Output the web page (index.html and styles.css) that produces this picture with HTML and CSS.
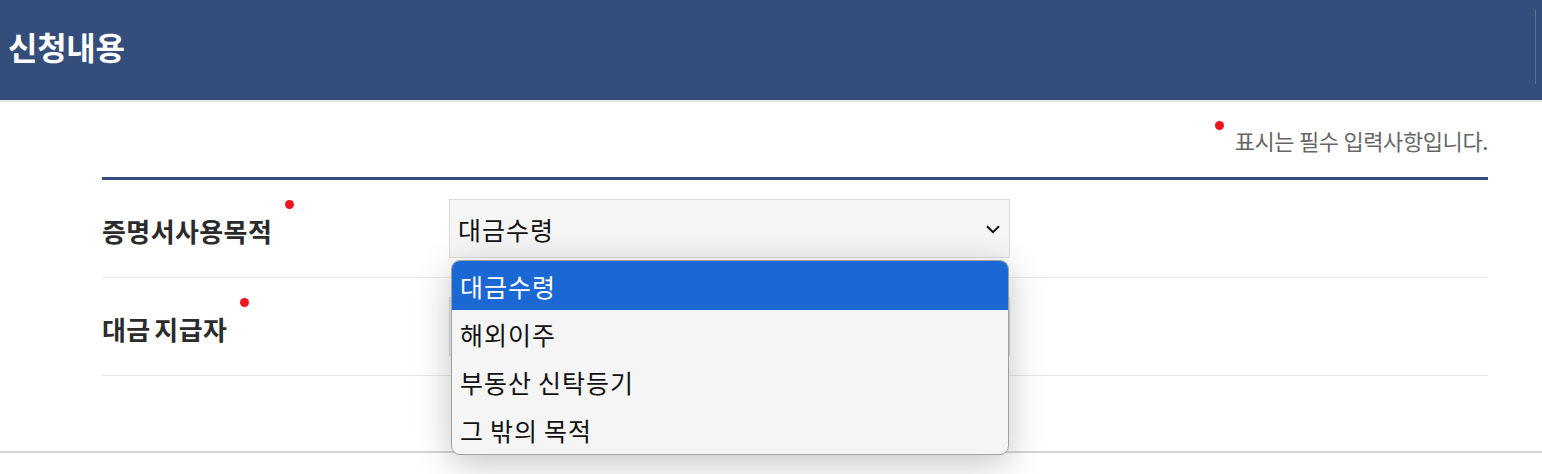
FILE: index.html
```html
<!DOCTYPE html>
<html lang="ko">
<head>
<meta charset="utf-8">
<title>신청내용</title>
<link rel="stylesheet" href="styles.css">
</head>
<body>
<header class="top">
  <h1 class="title">신청내용</h1>
  <div class="top-edge"></div>
</header>
<main class="content">
  <p class="note"><span class="dot note-dot"></span>표시는 필수 입력사항입니다.</p>
  <div class="form">
    <div class="row">
      <div class="label">증명서사용목적<span class="dot label-dot"></span></div>
      <div class="field">
        <div class="select">
          <span>대금수령</span>
          <svg class="chev" width="14" height="9" viewBox="0 0 14 9"><path d="M1 1.2 L7 7.2 L13 1.2" fill="none" stroke="#111" stroke-width="2"/></svg>
        </div>
        <ul class="menu">
          <li class="opt sel">대금수령</li>
          <li class="opt">해외이주</li>
          <li class="opt">부동산 신탁등기</li>
          <li class="opt">그 밖의 목적</li>
        </ul>
      </div>
    </div>
    <div class="row">
      <div class="label">대금 지급자<span class="dot label-dot"></span></div>
      <div class="field">
        <div class="select"><span></span></div>
      </div>
    </div>
  </div>
</main>
<div class="bottom-line"></div>
</body>
</html>
```
FILE: styles.css
```css
* { box-sizing: border-box; }
html, body { margin: 0; padding: 0; background: #fff; }
body {
  width: 1542px;
  min-height: 474px;
  font-family: "Noto Sans CJK KR", "Noto Sans", sans-serif;
  color: #222;
}
.top {
  height: 100px;
  background: #344d7a;
  display: flex;
  align-items: center;
  justify-content: space-between;
  border-bottom: 2px solid #e6e6e6;
  box-sizing: content-box;
}
.title {
  margin: 0 0 8px 8px;
  font-size: 32px;
  font-weight: 700;
  color: #fff;
  letter-spacing: -0.3px;
}
.top-edge {
  width: 1px;
  height: 75px;
  background: #5a6f95;
  margin-right: 6px;
  margin-bottom: 8px;
}
.content {
  padding: 0 54px 0 102px;
}
.note {
  margin: 0;
  height: 75px;
  display: flex;
  justify-content: flex-end;
  align-items: center;
  font-size: 22px;
  color: #666;
  letter-spacing: -0.4px;
  word-spacing: -1px;
  line-height: 1;
}
.dot {
  display: inline-block;
  flex: none;
  width: 9px;
  height: 9px;
  border-radius: 50%;
  background: #f0141e;
}
.note-dot {
  margin-right: 11px;
  align-self: flex-start;
  margin-top: 19px;
}
.form {
  border-top: 3px solid #344d7a;
}
.row {
  display: flex;
  height: 98px;
  border-bottom: 1px solid #e8e8e8;
  padding-top: 19px;
}
.label {
  width: 347px;
  font-size: 26px;
  font-weight: 700;
  color: #2b2b2b;
  padding-top: 12px;
  display: flex;
  align-items: flex-start;
  line-height: 40px;
  letter-spacing: 0.4px;
  word-spacing: -4px;
}
.label-dot {
  margin-left: 13px;
  margin-top: -11px;
}
.field {
  position: relative;
  width: 561px;
}
.select {
  height: 59px;
  background: #f5f5f5;
  border: 1px solid #dcdcdc;
  display: flex;
  align-items: center;
  justify-content: space-between;
  padding: 0 9px 0 8px;
  font-size: 25px;
  letter-spacing: 1px;
  color: #111;
}
.chev { margin-top: 2px; }
.menu {
  position: absolute;
  left: 2px;
  top: 61px;
  width: 558px;
  margin: 0;
  padding: 0;
  list-style: none;
  background: #f5f5f5;
  border: 1.5px solid #a0a0a0;
  border-radius: 9px;
  overflow: hidden;
  box-shadow: 0 8px 36px rgba(0,0,0,0.24);
  z-index: 5;
}
.opt {
  height: 48px;
  display: flex;
  align-items: center;
  padding-left: 8px;
  font-size: 25px;
  letter-spacing: 1px;
  word-spacing: -2px;
  color: #111;
}
.opt.sel {
  height: 49px;
  background: #1b68d4;
  color: #fff;
}
.bottom-line {
  margin-top: 75px;
  height: 2px;
  background: #d6d6d6;
}
```
